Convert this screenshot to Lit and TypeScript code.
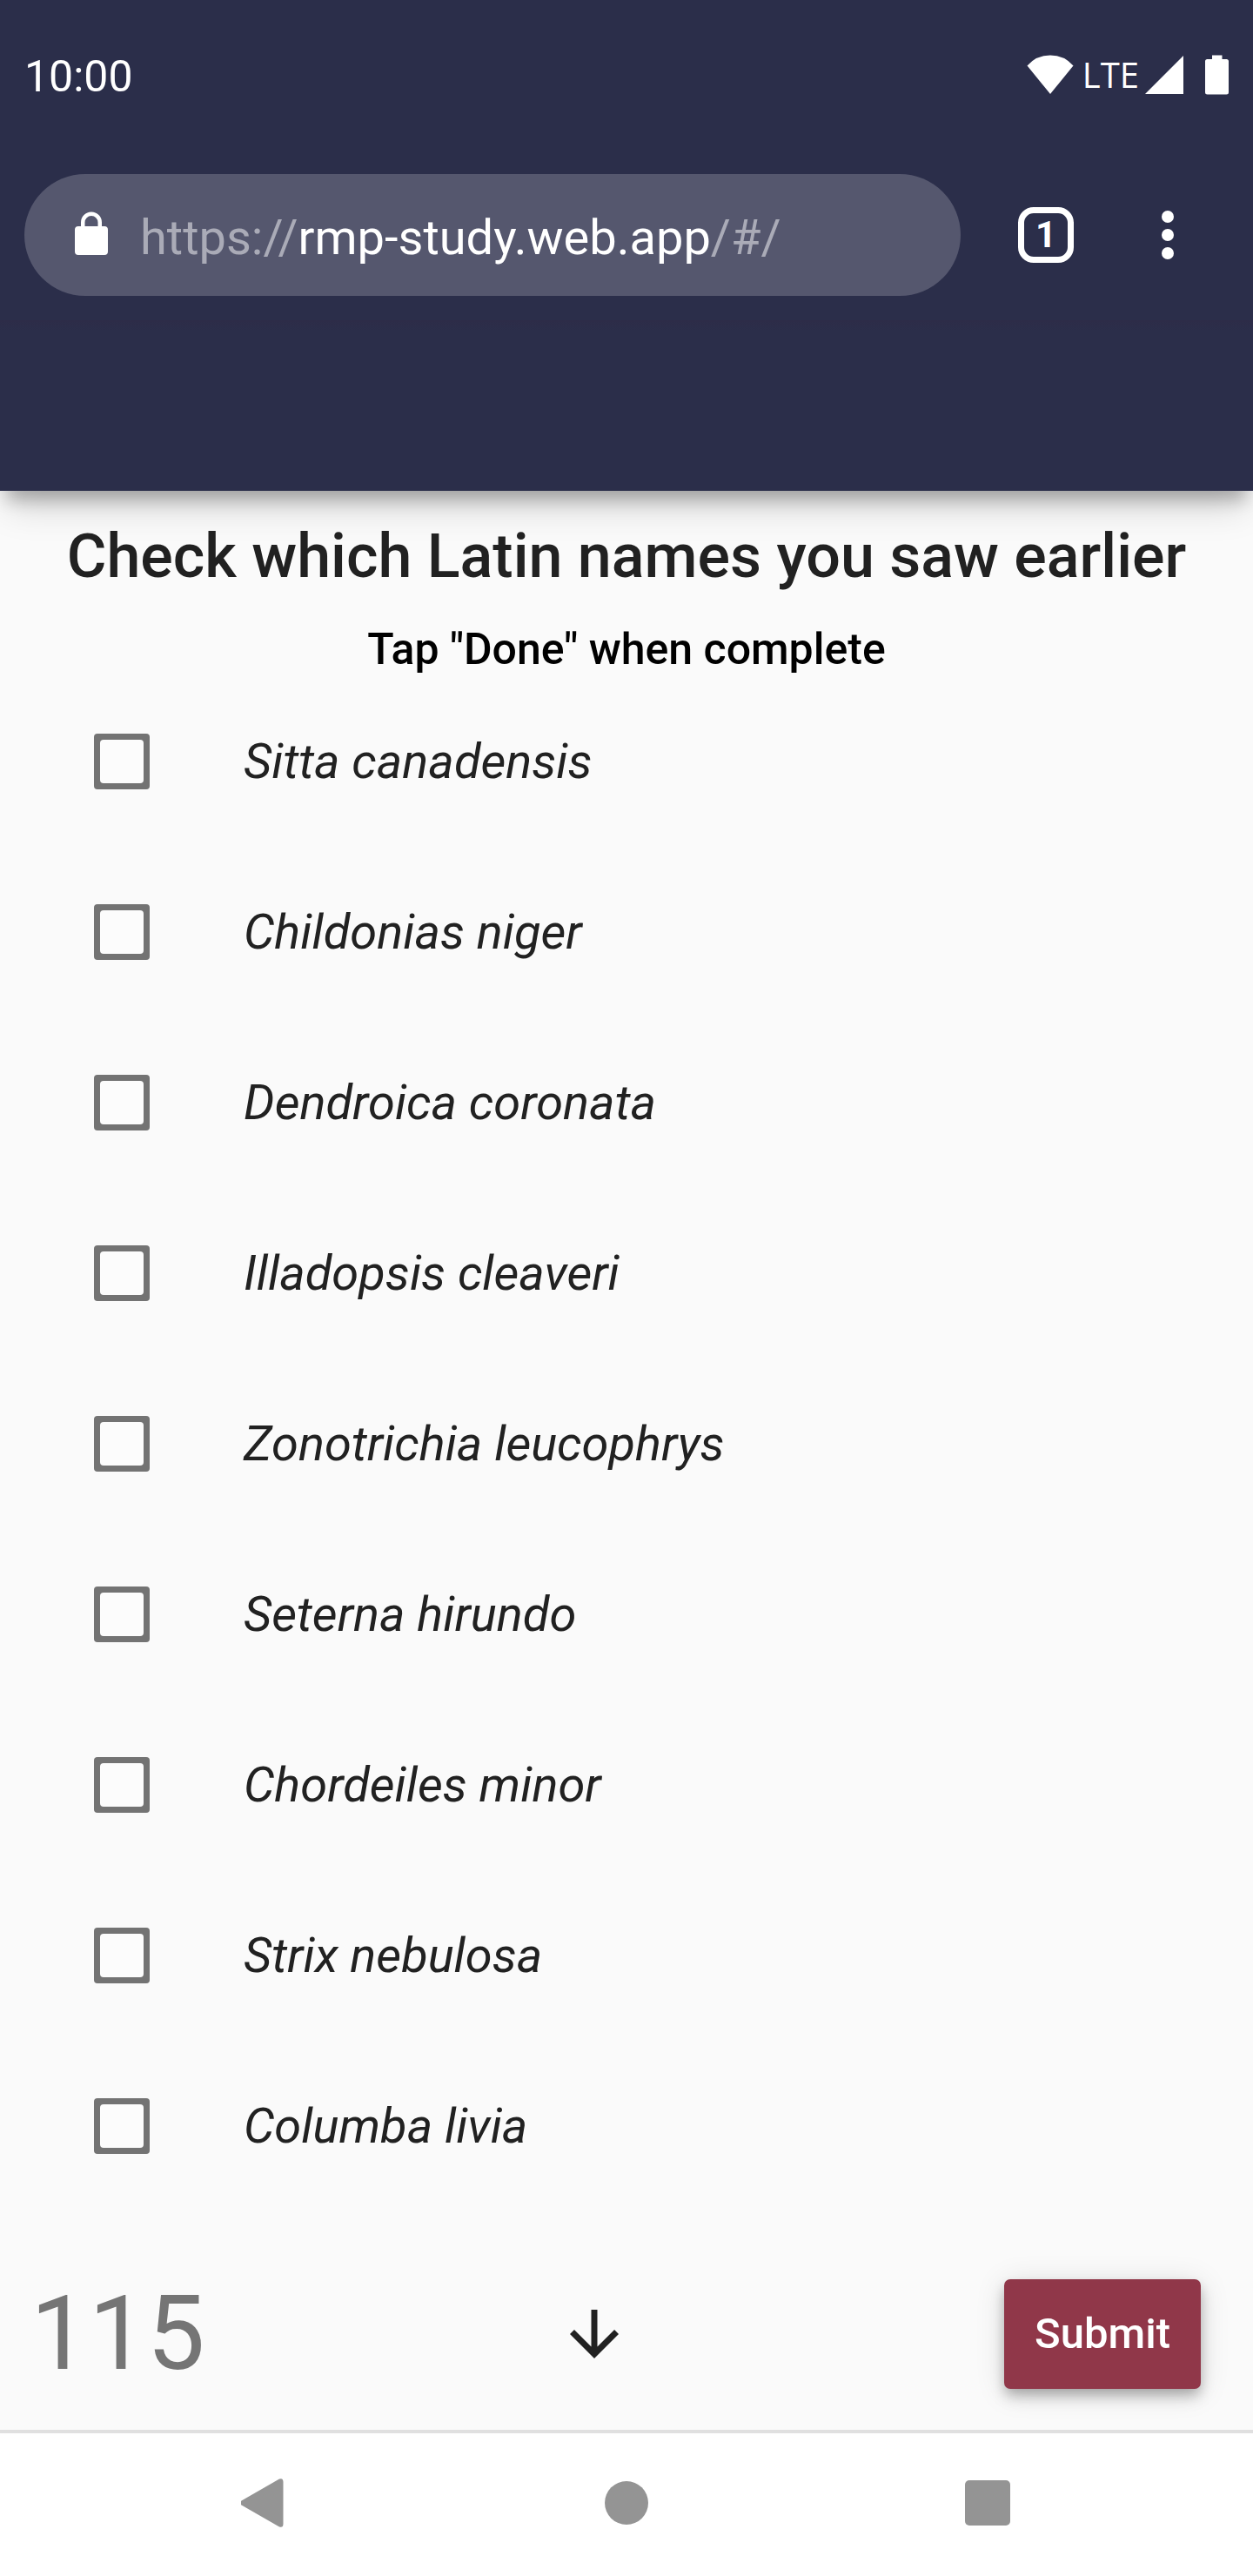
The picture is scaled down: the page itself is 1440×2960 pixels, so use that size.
import { LitElement, html, css } from "lit";
import { customElement, state } from "lit/decorators.js";

const NAMES = [
  "Sitta canadensis",
  "Childonias niger",
  "Dendroica coronata",
  "Illadopsis cleaveri",
  "Zonotrichia leucophrys",
  "Seterna hirundo",
  "Chordeiles minor",
  "Strix nebulosa",
  "Columba livia",
];

@customElement("status-bar")
class StatusBar extends LitElement {
  static styles = css`
    :host {
      display: flex;
      align-items: flex-start;
      justify-content: space-between;
      padding: 58px 28px 82px;
      color: #fff;
      font-size: 50px;
      line-height: 60px;
    }
    .icons {
      display: flex;
      align-items: center;
      height: 56px;
    }
    .lte {
      box-sizing: border-box;
      width: 82px;
      padding-right: 7px;
      font-family: "Open Sans", "Noto Sans", sans-serif;
      font-size: 40px;
      line-height: 56px;
      text-align: right;
    }
    .battery {
      margin-left: 25px;
    }
    svg {
      display: block;
      fill: #fff;
    }
  `;

  render() {
    return html`
      <span>10:00</span>
      <div class="icons">
        <svg width="54" height="46" viewBox="0 0 54 46" aria-hidden="true">
          <path d="M27 45 .5 12.500Q11 .5 27 .5T53.500 12.500Z" />
        </svg>
        <span class="lte">LTE</span>
        <svg width="44" height="46" viewBox="0 0 44 46" aria-hidden="true">
          <path d="M0 45 44 1V45Z" />
        </svg>
        <svg class="battery" width="27" height="46" viewBox="0 0 27 46" aria-hidden="true">
          <path d="M8 0.500H19.500V5H24.500Q27 5 27 7.500V43Q27 45.500 24.500 45.500H2.500Q0 45.500 0 43V7.500Q0 5 2.500 5H8Z" />
        </svg>
      </div>
    `;
  }
}

@customElement("browser-bar")
class BrowserBar extends LitElement {
  static styles = css`
    :host {
      display: flex;
      align-items: center;
      padding: 0 28px 28px;
      color: #fff;
    }
    .address {
      flex: 1;
      display: flex;
      align-items: center;
      gap: 35px;
      height: 140px;
      padding: 0 56px;
      border-radius: 70px;
      background: #55576e;
      color: #aaabb7;
      font-size: 56px;
      line-height: 66px;
      text-decoration: none;
    }
    .url {
      padding-top: 5px;
    }
    .domain {
      color: #fff;
    }
    button {
      display: flex;
      align-items: center;
      justify-content: center;
      width: 140px;
      height: 140px;
      padding: 0;
      border: 0;
      background: none;
      color: inherit;
      font: inherit;
    }
    .tabs {
      margin-left: 28px;
    }
    .count {
      box-sizing: border-box;
      width: 64px;
      height: 64px;
      border: 7px solid #fff;
      border-radius: 18px;
      font-size: 42px;
      font-weight: 700;
      line-height: 50px;
      text-align: center;
    }
    svg {
      display: block;
      fill: #fff;
    }
  `;

  render() {
    return html`
      <a class="address" href="https://rmp-study.web.app/#/">
        <svg width="42" height="56" viewBox="0 2 42 56" aria-hidden="true">
          <path
            fill-rule="evenodd"
            d="M9 20V15.500a12 12 0 0 1 24 0V20H36a4 4 0 0 1 4 4V49a4 4 0 0 1-4 4H6a4 4 0 0 1-4-4V24a4 4 0 0 1 4-4ZM13.500 20H28.500V15.500a7.500 7.500 0 0 0-15 0Z"
          />
        </svg>
        <span class="url">https://<span class="domain">rmp-study.web.app</span>/#/</span>
      </a>
      <button class="tabs" aria-label="Open tabs"><span class="count">1</span></button>
      <button aria-label="Menu">
        <svg width="14" height="56" viewBox="0 0 14 56" aria-hidden="true">
          <circle cx="7" cy="7" r="7" />
          <circle cx="7" cy="28" r="7" />
          <circle cx="7" cy="49" r="7" />
        </svg>
      </button>
    `;
  }
}

@customElement("name-list")
class NameList extends LitElement {
  @state() private checked = new Set<string>();

  static styles = css`
    ul {
      margin: 0;
      padding: 0;
      list-style: none;
    }
    label {
      display: flex;
      align-items: center;
      gap: 108px;
      height: 196px;
      padding: 0 108px;
      color: #212121;
      font-size: 56px;
      font-style: italic;
      line-height: 66px;
    }
    input {
      appearance: none;
      flex: none;
      width: 64px;
      height: 64px;
      margin: 0;
      border-radius: 4px;
      background: #737373;
    }
    input::before {
      content: "";
      display: block;
      width: 50px;
      height: 50px;
      margin: 7px;
      border-radius: 4px;
      background: #fcfcfc;
    }
    input:checked::before {
      background: #903749;
    }
  `;

  private toggle(name: string) {
    const next = new Set(this.checked);
    if (!next.delete(name)) next.add(name);
    this.checked = next;
  }

  render() {
    return html`
      <ul>
        ${NAMES.map(
          (name) => html`
            <li>
              <label>
                <input
                  type="checkbox"
                  .checked=${this.checked.has(name)}
                  @change=${() => this.toggle(name)}
                />
                <span>${name}</span>
              </label>
            </li>
          `
        )}
      </ul>
    `;
  }
}

@customElement("system-nav")
class SystemNav extends LitElement {
  static styles = css`
    :host {
      display: flex;
      align-items: center;
      justify-content: center;
      gap: 275px;
      padding: 10px 0 14px;
      border-top: 4px solid #e0e0e0;
      background: #fff;
    }
    button {
      width: 140px;
      height: 140px;
      padding: 0;
      border: 0;
      background: none;
    }
    svg {
      display: block;
      margin: auto;
      fill: #949494;
    }
  `;

  render() {
    return html`
      <button aria-label="Back">
        <svg width="56" height="56" viewBox="1 0 56 56" aria-hidden="true">
          <path d="M1.500 25.500Q-1 28 1.500 30.500L45 55.500Q49.500 57 49.500 52V4Q49.500-1 45 .5Z" />
        </svg>
      </button>
      <button aria-label="Home">
        <svg width="56" height="56" viewBox="0 0 56 56" aria-hidden="true">
          <circle cx="28" cy="28" r="25" />
        </svg>
      </button>
      <button aria-label="Recent apps">
        <svg width="56" height="56" viewBox="0 0 56 56" aria-hidden="true">
          <rect x="2" y="2" width="52" height="52" rx="5" />
        </svg>
      </button>
    `;
  }
}

@customElement("app-root")
class AppRoot extends LitElement {
  static styles = css`
    :host {
      display: flex;
      flex-direction: column;
      min-height: 100vh;
      background: #fafafa;
      font-family: Roboto, "Liberation Sans", sans-serif;
    }
    header {
      background: #2b2e4a;
      box-shadow: 0 18px 18px -8px rgba(0, 0, 0, 0.24), 0 24px 40px -8px rgba(0, 0, 0, 0.18);
    }
    .app-bar {
      height: 196px;
      background: linear-gradient(#2d2c48, #2b2e4a 12px);
    }
    main {
      flex: 1;
      display: flex;
      flex-direction: column;
      padding-top: 34px;
    }
    h1,
    p {
      margin: 0;
      text-align: center;
      font-weight: 500;
    }
    h1 {
      color: #212121;
      font-size: 70px;
      line-height: 82px;
    }
    p {
      margin-top: 35px;
      color: #000;
      font-size: 50px;
      line-height: 62px;
    }
    .footer {
      display: flex;
      align-items: center;
      justify-content: space-between;
      margin-top: auto;
      padding: 0 60px 40px 35px;
    }
    .counter {
      color: #757575;
      font-size: 119px;
      line-height: 140px;
    }
    .down {
      margin-right: 24px;
      padding: 0;
      border: 0;
      background: none;
    }
    .down svg {
      display: block;
      fill: #212121;
    }
    .submit {
      height: 126px;
      padding: 0 35px;
      border: 0;
      border-radius: 7px;
      background: #903749;
      color: #fff;
      font: 500 49px/58px Roboto, "Liberation Sans", sans-serif;
      box-shadow: 0 7px 14px -3px rgba(0, 0, 0, 0.2), 0 10px 17px rgba(0, 0, 0, 0.14),
        0 4px 35px rgba(0, 0, 0, 0.12);
    }
  `;

  render() {
    return html`
      <header>
        <status-bar></status-bar>
        <browser-bar></browser-bar>
        <div class="app-bar"></div>
      </header>
      <main>
        <h1>Check which Latin names you saw earlier</h1>
        <p>Tap "Done" when complete</p>
        <name-list></name-list>
        <div class="footer">
          <span class="counter">115</span>
          <button class="down" aria-label="Scroll down">
            <svg width="84" height="84" viewBox="0 0 24 24" aria-hidden="true">
              <path d="M20 12l-1.410-1.410L13 16.170V4h-2v12.170l-5.580-5.590L4 12l8 8 8-8z" />
            </svg>
          </button>
          <button class="submit">Submit</button>
        </div>
      </main>
      <system-nav></system-nav>
    `;
  }
}
